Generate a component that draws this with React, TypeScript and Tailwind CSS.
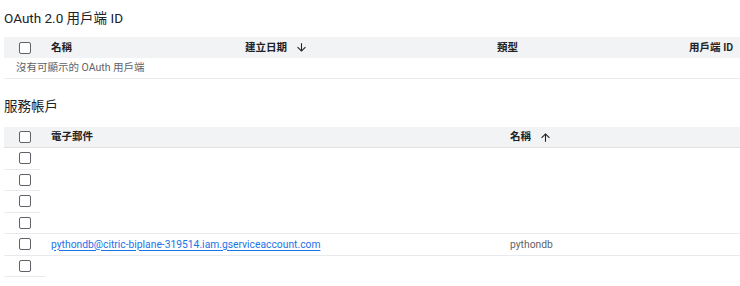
import { useState } from "react";

function SortArrow({ up }: { up?: boolean }) {
  return (
    <svg
      width="13"
      height="13"
      viewBox="0 0 24 24"
      className={up ? "rotate-180" : ""}
      fill="#202124"
    >
      <path d="M20 12l-1.41-1.41L13 16.17V4h-2v12.17l-5.58-5.59L4 12l8 8 8-8z" />
    </svg>
  );
}

function Checkbox() {
  return (
    <span className="block w-[12px] h-[12px] border-[1.5px] border-[#5f6368] rounded-[2px] bg-white" />
  );
}

function App() {
  const [accounts] = useState([
    { email: "", name: "" },
    { email: "", name: "" },
    { email: "", name: "" },
    { email: "", name: "" },
    {
      email: "pythondb@citric-biplane-319514.iam.gserviceaccount.com",
      name: "pythondb",
    },
    { email: "", name: "" },
  ]);

  return (
    <div className="w-[740px] h-[286px] overflow-hidden bg-white pl-1 font-['Roboto','Noto_Sans_CJK_TC',sans-serif] text-[#202124]">
      <h2 className="h-[37px] pt-[8px] text-[13.5px] leading-[20px]">
        OAuth 2.0 用戶端 ID
      </h2>

      {/* OAuth clients table */}
      <div className="grid grid-cols-[47px_194px_252px_1fr_auto] h-[21px] items-center bg-[#f1f3f4] text-[10.5px] font-semibold">
        <div className="pl-[15px]">
          <Checkbox />
        </div>
        <div>名稱</div>
        <div className="flex items-center gap-[8px]">
          建立日期
          <SortArrow />
        </div>
        <div>類型</div>
        <div className="text-right pr-[7px]">用戶端 ID</div>
      </div>
      <div className="h-[21px] flex items-center pl-[12px] border-b border-[#e8eaed] text-[10.5px] text-[#5f6368]">
        沒有可顯示的 OAuth 用戶端
      </div>

      <h2 className="h-[48px] pt-[17px] text-[13.5px] leading-[20px]">
        服務帳戶
      </h2>

      {/* Service accounts table */}
      <div className="grid grid-cols-[47px_459px_1fr] h-[21px] items-center bg-[#f1f3f4] border-b border-[#e0e0e0] text-[10.5px] font-semibold">
        <div className="pl-[15px]">
          <Checkbox />
        </div>
        <div>電子郵件</div>
        <div className="flex items-center gap-[8px]">
          名稱
          <SortArrow up />
        </div>
      </div>
      {accounts.map((acc, index) => {
        const fullLine = index === 3 || index === 4;
        return (
          <div
            key={index}
            className={
              "grid grid-cols-[47px_459px_1fr] h-[21.5px] items-stretch text-[10.3px] " +
              (fullLine ? "border-b border-[#e8eaed]" : "")
            }
          >
            <div
              className={
                "flex items-center pl-[15px] " +
                (fullLine
                  ? ""
                  : "border-b border-[#e8eaed] " +
                    (index === accounts.length - 1 ? "w-[41px]" : "w-[36px]"))
              }
            >
              <Checkbox />
            </div>
            <div className="flex items-center">
              {acc.email && (
                <a className="text-[#1a73e8] underline underline-offset-[1.5px] decoration-[#1a73e8]">
                  {acc.email}
                </a>
              )}
            </div>
            <div className="flex items-center text-[#5f6368]">{acc.name}</div>
          </div>
        );
      })}
    </div>
  );
}

export default App;
